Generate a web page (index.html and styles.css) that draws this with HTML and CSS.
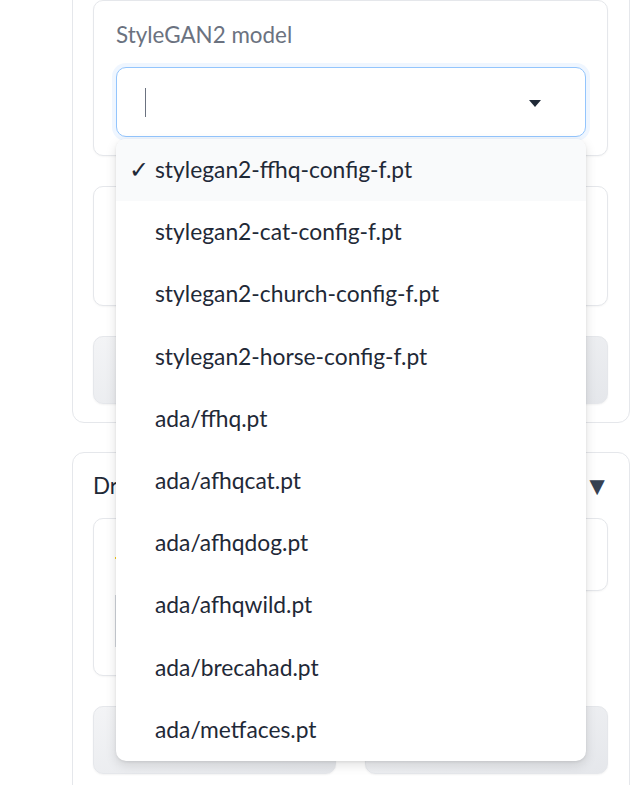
FILE: index.html
```html
<!DOCTYPE html>
<html>
<head>
<meta charset="utf-8">
<link rel="stylesheet" href="styles.css">
</head>
<body>
<div class="page">
  <div class="panel panel-top">
    <div class="block block-model">
      <div class="label">StyleGAN2 model</div>
      <div class="select-wrap">
        <div class="input">
          <span class="caret"></span>
          <span class="arrow"></span>
        </div>
        <ul class="dropdown">
          <li class="item selected"><span class="check">✓</span>stylegan2-ffhq-config-f.pt</li>
          <li class="item">stylegan2-cat-config-f.pt</li>
          <li class="item">stylegan2-church-config-f.pt</li>
          <li class="item">stylegan2-horse-config-f.pt</li>
          <li class="item">ada/ffhq.pt</li>
          <li class="item">ada/afhqcat.pt</li>
          <li class="item">ada/afhqdog.pt</li>
          <li class="item">ada/afhqwild.pt</li>
          <li class="item">ada/brecahad.pt</li>
          <li class="item">ada/metfaces.pt</li>
        </ul>
      </div>
    </div>
    <div class="block block-empty"></div>
    <div class="btn btn-wide"></div>
  </div>

  <div class="panel panel-bottom">
    <div class="acc-head">
      <span class="acc-title">Drag</span>
      <span class="acc-icon">▼</span>
    </div>
    <div class="row">
      <div class="block block-left">
        <span class="dot"></span>
        <span class="vline"></span>
      </div>
      <div class="block block-right"></div>
    </div>
    <div class="row">
      <div class="btn btn-half"></div>
      <div class="btn btn-half"></div>
    </div>
  </div>
</div>
</body>
</html>
```

FILE: styles.css
```css
* { box-sizing: border-box; }
html, body {
  margin: 0;
  padding: 0;
  background: #ffffff;
  overflow: hidden;
}
body {
  font-family: "Lato", "Open Sans", sans-serif;
  color: #1f2937;
}
.page {
  width: 636px;
  height: 785px;
  padding-left: 72px;
  padding-right: 6px;
  overflow: hidden;
}
.panel {
  border: 1px solid #e5e7eb;
  border-radius: 12px;
  padding: 20px 21px 18px 20px;
  display: flex;
  flex-direction: column;
  gap: 30px;
  background: #fff;
}
.panel-top {
  margin-top: -21px;
}
.panel-bottom {
  margin-top: 29px;
  height: 400px;
  padding-top: 20px;
  gap: 0;
}
.block {
  border: 1px solid #e5e7eb;
  border-radius: 10px;
  background: #fff;
  box-shadow: 0 1px 2px rgba(0,0,0,0.04);
}
.block-model {
  padding: 20px 21px 18px 22px;
  height: 156px;
}
.label {
  font-size: 22.4px;
  line-height: 28px;
  color: #6b7280;
  margin-bottom: 18px;
}
.select-wrap {
  position: relative;
}
.input {
  height: 70px;
  border: 1px solid #93c5fd;
  border-radius: 10px;
  box-shadow: 0 0 0 4px #eff6ff;
  display: flex;
  align-items: center;
  justify-content: space-between;
  padding: 0 44px 0 28px;
  background: #fff;
}
.caret {
  width: 1px;
  height: 29px;
  background: #6b7280;
}
.arrow {
  width: 0;
  height: 0;
  border-left: 6.5px solid transparent;
  border-right: 6.5px solid transparent;
  border-top: 7px solid #1f2937;
  margin-top: 2px;
}
.dropdown {
  position: absolute;
  left: 0;
  top: 72px;
  width: 470px;
  margin: 0;
  padding: 0;
  list-style: none;
  background: #fff;
  border-radius: 10px;
  box-shadow: 0 4px 12px rgba(0,0,0,0.12), 0 1px 3px rgba(0,0,0,0.08);
  overflow: hidden;
  z-index: 10;
}
.item {
  height: 62.2px;
  display: flex;
  align-items: center;
  padding-left: 39px;
  padding-bottom: 2px;
  font-size: 22.8px;
  color: #1f2937;
  position: relative;
}
.item.selected {
  background: #f9fafb;
}
.check {
  position: absolute;
  left: 13px;
  font-size: 24px;
}
.block-empty {
  height: 120px;
}
.btn {
  height: 68px;
  border-radius: 10px;
  border: 1px solid #e5e7eb;
  background: linear-gradient(to bottom right, #f3f4f6, #e5e7eb);
  box-shadow: 0 1px 2px rgba(0,0,0,0.05);
}
.acc-head {
  display: flex;
  justify-content: space-between;
  align-items: center;
  height: 30px;
  margin-top: -3px;
  margin-bottom: 18px;
}
.acc-title {
  font-size: 22.4px;
  color: #1f2937;
}
.acc-icon {
  font-size: 26px;
  color: #374151;
  margin-right: -2px;
}
.row {
  display: flex;
  gap: 29px;
  align-items: flex-start;
  margin-bottom: 30px;
}
.row > * {
  flex: 1;
}
.block-left {
  height: 158px;
  position: relative;
}
.block-right {
  height: 73px;
}
.dot {
  position: absolute;
  left: 21px;
  top: 38px;
  width: 2px;
  height: 2px;
  background: #facc15;
}
.vline {
  position: absolute;
  left: 21px;
  top: 76px;
  width: 2px;
  height: 52px;
  background: #d1d5db;
}
.btn-half {
  height: 68px;
}
```
